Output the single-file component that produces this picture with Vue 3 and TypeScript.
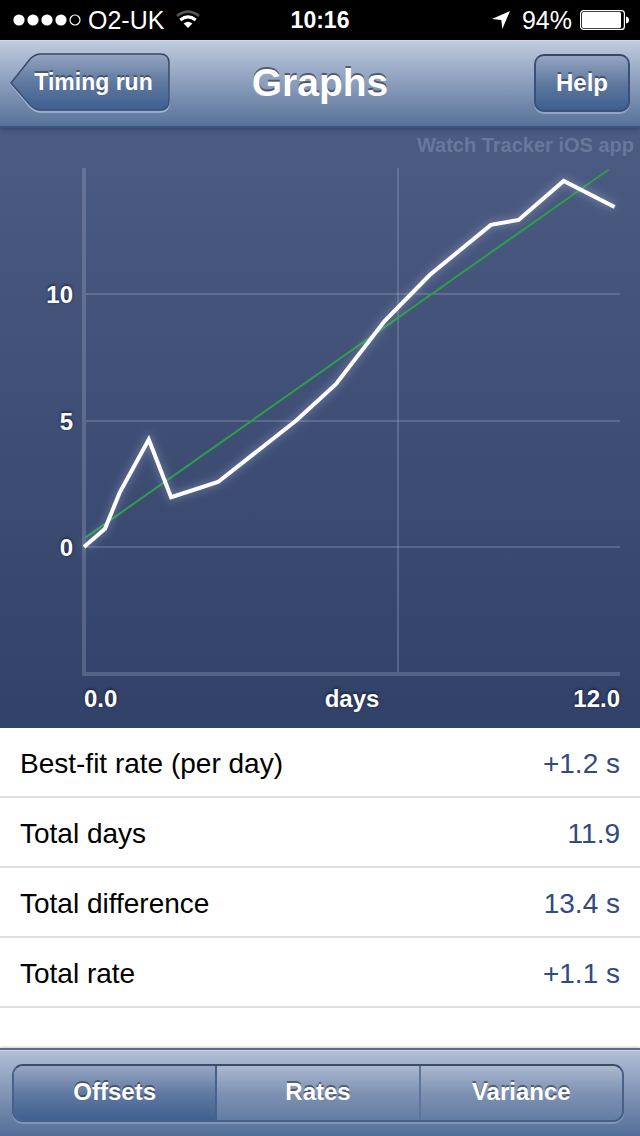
<script setup lang="ts">
import { computed, ref } from 'vue'

type Point = [day: number, seconds: number]

const readings: Point[] = [
  [0, 0], [0.47, 0.72], [0.8, 2.15], [1.45, 4.25], [1.95, 1.97], [3, 2.57], [4.75, 5],
  [5.64, 6.44], [6.73, 8.93], [7.74, 10.75], [9.11, 12.73], [9.73, 12.93], [10.74, 14.47], [11.88, 13.44],
]
const bestFit: Point[] = [[0.04, 0.38], [11.75, 14.92]]
const ticks = [10, 5, 0]

const px = (day: number) => 84 + (day * 536) / 12
const py = (seconds: number) => 419 - seconds * 25.3
const toLine = (points: Point[]) =>
  points.map(([d, s]) => `${px(d).toFixed(1)},${py(s).toFixed(1)}`).join(' ')

const readingLine = computed(() => toLine(readings))
const fitLine = computed(() => toLine(bestFit))

const stats = [
  { label: 'Best-fit rate (per day)', value: '+1.2 s' },
  { label: 'Total days', value: '11.9' },
  { label: 'Total difference', value: '13.4 s' },
  { label: 'Total rate', value: '+1.1 s' },
]

const tabs = ['Offsets', 'Rates', 'Variance']
const active = ref('Offsets')
</script>

<template>
  <div class="screen">
    <div class="status">
      <div class="side">
        <svg class="signal" width="68" height="12" viewBox="0 0 68 12" aria-hidden="true">
          <circle v-for="n in 4" :key="n" :cx="n * 14 - 8" cy="6" r="5.6" fill="#fff" />
          <circle cx="62" cy="6" r="5" fill="none" stroke="#fff" stroke-width="1.2" />
        </svg>
        <span>O2-UK</span>
        <svg class="wifi" width="24" height="20" viewBox="0 0 24 20" aria-hidden="true">
          <path d="M1 6Q12 -2.600 23 6" fill="none" stroke="#555" stroke-width="2.600" />
          <path d="M4.300 10Q12 3.800 19.700 10" fill="none" stroke="#fff" stroke-width="3" />
          <path d="M7.600 13.600Q12 10 16.400 13.600L12 18Z" fill="#fff" />
        </svg>
      </div>
      <strong class="clock">10:16</strong>
      <div class="side end">
        <svg class="arrow" width="18" height="18" viewBox="0 0 18 18" aria-hidden="true">
          <path d="M18 0L0 8L9.300 9L10.300 18Z" fill="#fff" />
        </svg>
        <span>94%</span>
        <svg class="battery" width="50" height="20" viewBox="0 0 50 20" aria-hidden="true">
          <rect x="0.600" y="0.600" width="43.800" height="18.800" rx="3" fill="none" stroke="#fff" stroke-width="1.200" />
          <rect x="2" y="2" width="39" height="16" rx="1.500" fill="#fff" />
          <path d="M46 6.500Q49 7 49 10Q49 13 46 13.500Z" fill="#fff" />
        </svg>
      </div>
    </div>

    <header class="navbar">
      <div class="slot">
        <button class="back" type="button">
          <svg class="back-shape" width="160" height="60" viewBox="0 0 160 60" aria-hidden="true">
            <defs>
              <linearGradient id="backFill" x1="0" y1="0" x2="0" y2="1">
                <stop offset="0" stop-color="#96a5c1" />
                <stop offset="0.500" stop-color="#60799f" />
                <stop offset="1" stop-color="#3e608f" />
              </linearGradient>
              <linearGradient id="backEdge" x1="0" y1="0" x2="0" y2="1">
                <stop offset="0" stop-color="#3b4660" />
                <stop offset="1" stop-color="#36527f" />
              </linearGradient>
            </defs>
            <path d="M1 31L20 7Q25 2 31 2H150Q159 2 159 11V50Q159 59 150 59H31Q25 59 20 54Z" fill="none" stroke="#a9b9d2" stroke-width="1.500" />
            <path d="M1 30L20 6Q25 1 31 1H150Q159 1 159 10V48Q159 57 150 57H31Q25 57 20 52Z" fill="url(#backFill)" stroke="url(#backEdge)" stroke-width="1.500" />
          </svg>
          <span class="back-text">Timing run</span>
        </button>
      </div>
      <h1>Graphs</h1>
      <div class="slot end">
        <button class="help" type="button">Help</button>
      </div>
    </header>

    <main>
      <section class="chart">
        <svg viewBox="0 0 640 600" role="img" aria-label="Offset in seconds over days">
          <defs>
            <filter id="glow" x="-10%" y="-10%" width="120%" height="120%">
              <feGaussianBlur stdDeviation="4" />
            </filter>
          </defs>
          <text class="watermark" x="634" y="24" text-anchor="end">Watch Tracker iOS app</text>
          <g class="grid">
            <line v-for="t in ticks" :key="t" x1="86" x2="620" :y1="Math.round(py(t))" :y2="Math.round(py(t))" />
            <line x1="398" x2="398" y1="40" y2="544" />
          </g>
          <path class="axes" d="M84 40V546H620" />
          <polyline class="fit" :points="fitLine" />
          <polyline class="halo" :points="readingLine" filter="url(#glow)" />
          <polyline class="trace" :points="readingLine" />
          <g class="labels">
            <text v-for="t in ticks" :key="t" x="73" :y="Math.round(py(t)) + 9" text-anchor="end">{{ t }}</text>
            <text x="84" y="579">0.0</text>
            <text x="352" y="579" text-anchor="middle">days</text>
            <text x="620" y="579" text-anchor="end">12.0</text>
          </g>
        </svg>
      </section>

      <table class="stats">
        <tbody>
          <tr v-for="s in stats" :key="s.label">
            <th scope="row">{{ s.label }}</th>
            <td>{{ s.value }}</td>
          </tr>
        </tbody>
      </table>
    </main>

    <footer class="toolbar">
      <div class="segments">
        <button
          v-for="t in tabs"
          :key="t"
          type="button"
          :class="{ on: t === active }"
          :aria-pressed="t === active"
          @click="active = t"
        >{{ t }}</button>
      </div>
    </footer>
  </div>
</template>

<style>
body {
  margin: 0;
  background: #fff;
}
</style>

<style scoped>
.screen {
  display: flex;
  flex-direction: column;
  min-height: 100vh;
  background: #fff;
  color: #000;
  font-family: "Liberation Sans", Arial, sans-serif;
}
.screen *,
.screen {
  box-sizing: border-box;
}
.status {
  display: flex;
  align-items: center;
  height: 40px;
  padding: 0 13px;
  background: #000;
  color: #fff;
  font-size: 25px;
  line-height: 40px;
}
.side {
  display: flex;
  flex: 1;
  align-items: center;
}
.end {
  justify-content: flex-end;
}
.signal {
  margin-right: 7px;
}
.wifi {
  margin-left: 12px;
}
.clock {
  font-size: 23px;
}
.arrow {
  margin-right: 12px;
}
.battery {
  margin: 0 -3px 0 8px;
}
.navbar {
  position: relative;
  z-index: 1;
  display: flex;
  align-items: center;
  height: 88px;
  padding: 0 10px 2px;
  border-top: 1px solid #d3dbe9;
  border-bottom: 2px solid #3f5581;
  background: linear-gradient(#bfcbdf, #8b9dbc 50%, #577299);
  box-shadow: 0 2px 4px rgba(30, 40, 80, 0.35);
}
.slot {
  display: flex;
  flex: 1;
}
button {
  margin: 0;
  padding: 0;
  border: 0;
  background: none;
  color: #fff;
  font: bold 24px/28px "Liberation Sans", Arial, sans-serif;
  text-shadow: 0 -2px 0 rgba(45, 55, 75, 0.65);
}
.back {
  position: relative;
  width: 160px;
  height: 60px;
  padding: 0 0 2px 7px;
  font-size: 23px;
}
.back-shape {
  position: absolute;
  inset: 0;
}
.back-text {
  position: relative;
}
h1 {
  margin: 0;
  color: #fff;
  font-size: 39px;
  line-height: 44px;
  text-shadow: 0 -2px 0 rgba(45, 55, 75, 0.7);
}
.help {
  width: 96px;
  height: 58px;
  border: 2px solid #3a5079;
  border-top-color: #3b4660;
  border-radius: 10px;
  background: linear-gradient(#96a5c1, #60799f 50%, #3e608f);
  box-shadow: 0 2px 0 rgba(175, 192, 217, 0.6);
}
.chart {
  background: linear-gradient(#4c5b82, #314168);
}
.chart svg {
  display: block;
  width: 100%;
}
.watermark {
  fill: #69779a;
  font-size: 20px;
  font-weight: bold;
}
.grid line {
  stroke: #aab4d2;
  stroke-opacity: 0.28;
  stroke-width: 2;
}
.axes {
  fill: none;
  stroke: #b4bcd6;
  stroke-opacity: 0.26;
  stroke-width: 4;
}
.fit {
  fill: none;
  stroke: #2d9e49;
  stroke-width: 2;
}
.halo {
  fill: none;
  stroke: #dde5ff;
  stroke-opacity: 0.3;
  stroke-width: 6;
}
.trace {
  fill: none;
  stroke: #fff;
  stroke-width: 4;
}
.labels {
  fill: #fff;
  font-size: 24px;
  font-weight: bold;
  text-shadow: 0 -1px 3px rgba(10, 15, 40, 0.8);
}
.stats {
  width: 100%;
  border-collapse: separate;
  border-spacing: 0;
  font-size: 28px;
  line-height: 32px;
}
.stats th,
.stats td {
  height: 70px;
  padding: 4px 20px 0;
  border-bottom: 2px solid #dedfe0;
  font-weight: normal;
  text-align: left;
}
.stats td {
  color: #324a80;
  text-align: right;
}
.toolbar {
  height: 88px;
  margin-top: auto;
  padding: 14px 16px 0 12px;
  border-top: 2px solid #5f6b8c;
  background: linear-gradient(#b2c0d7, #8699b8 45%, #536e98);
  box-shadow: inset 0 1px 0 #cdd7e6, 0 -1px 2px rgba(0, 0, 0, 0.2);
}
.segments {
  display: flex;
  height: 58px;
  overflow: hidden;
  border: 2px solid #4a6087;
  border-top-color: #3f4c65;
  border-radius: 11px;
  box-shadow: 0 2px 0 rgba(150, 170, 202, 0.6);
}
.segments button {
  flex: 1;
  padding-bottom: 2px;
  border-right: 2px solid #5c759c;
  background: linear-gradient(#abb8cf, #7e92b3 50%, #637da3);
}
.segments button:last-child {
  border-right: 0;
}
.segments .on {
  border-right-color: #46618e;
  background: linear-gradient(#98a6c2, #607aa2 50%, #3f608f);
}
</style>
